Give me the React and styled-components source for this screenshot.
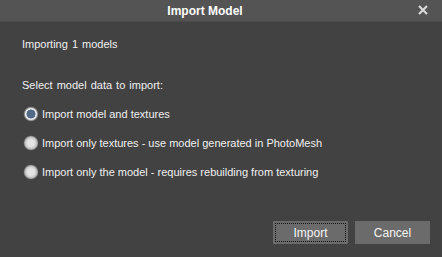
import React, { useState } from "react";
import styled, { createGlobalStyle } from "styled-components";

const Global = createGlobalStyle`
  html, body {
    margin: 0;
    padding: 0;
    background: #424242;
  }
  * { box-sizing: border-box; }
`;

const Dialog = styled.div`
  width: 442px;
  height: 257px;
  background: #424242;
  display: flex;
  flex-direction: column;
  font-family: "Liberation Sans", Arial, sans-serif;
  font-size: 11px;
  color: #f0f0f0;
`;

const TitleBar = styled.div`
  height: 22px;
  flex: none;
  background: #545454;
  border-bottom: 1px solid #4a4a4a;
  display: flex;
  align-items: center;
  justify-content: center;
  padding-right: 32px;
  position: relative;
  font-size: 12px;
  font-weight: bold;
  color: #ffffff;
`;

const Close = styled.span`
  position: absolute;
  right: 14px;
  top: 5px;
  width: 10px;
  height: 10px;
  display: flex;
`;

const Body = styled.div`
  flex: 1;
  display: flex;
  flex-direction: column;
  padding: 14px 12px 13px 22px;
`;

const Line = styled.div`
  line-height: 16px;
  margin-bottom: ${(p) => p.$gap || 0}px;
  word-spacing: 1px;
`;

const Options = styled.div`
  display: flex;
  flex-direction: column;
  gap: 13px;
  padding-left: 2px;
`;

const Option = styled.label`
  display: flex;
  align-items: center;
  gap: 4px;
  line-height: 16px;
  cursor: pointer;
`;

const Radio = styled.span`
  width: 14px;
  height: 14px;
  border-radius: 50%;
  flex: none;
  background: ${(p) =>
    p.$checked
      ? "radial-gradient(circle, #4f6b88 0 4.2px, #e8e8e8 4.8px 5.6px, #9a9a9a 6.4px)"
      : "radial-gradient(circle, #e4e4e4 0 3px, #d2d2d2 5px, #a8a8a8 6.4px)"};
  box-shadow: 0 0 0 0.5px #5a5a5a;
`;

const Footer = styled.div`
  margin-top: auto;
  display: flex;
  justify-content: flex-end;
  gap: 7px;
`;

const Button = styled.button`
  width: ${(p) => p.$w}px;
  height: 23px;
  background: #6b6b6b;
  color: #f4f4f4;
  border: none;
  font-family: inherit;
  font-size: 12px;
  padding: 0;
  position: relative;
  outline: ${(p) => (p.$focus ? "1px dotted #111" : "none")};
  outline-offset: -3px;
`;

const options = [
  "Import model and textures",
  "Import only textures - use model generated in PhotoMesh",
  "Import only the model - requires rebuilding from texturing",
];

export default function App() {
  const [sel, setSel] = useState(0);
  return (
    <Dialog>
      <Global />
      <TitleBar>
        Import Model
        <Close>
          <svg width="10" height="10" viewBox="0 0 10 10">
            <path d="M1 1L9 9M9 1L1 9" stroke="#d8d8d8" strokeWidth="2.2" />
          </svg>
        </Close>
      </TitleBar>
      <Body>
        <Line $gap={25}>Importing 1 models</Line>
        <Line $gap={13}>Select model data to import:</Line>
        <Options>
          {options.map((o, i) => (
            <Option key={o} onClick={() => setSel(i)}>
              <Radio $checked={sel === i} />
              {o}
            </Option>
          ))}
        </Options>
        <Footer>
          <Button $w={75} $focus>Import</Button>
          <Button $w={75}>Cancel</Button>
        </Footer>
      </Body>
    </Dialog>
  );
}
